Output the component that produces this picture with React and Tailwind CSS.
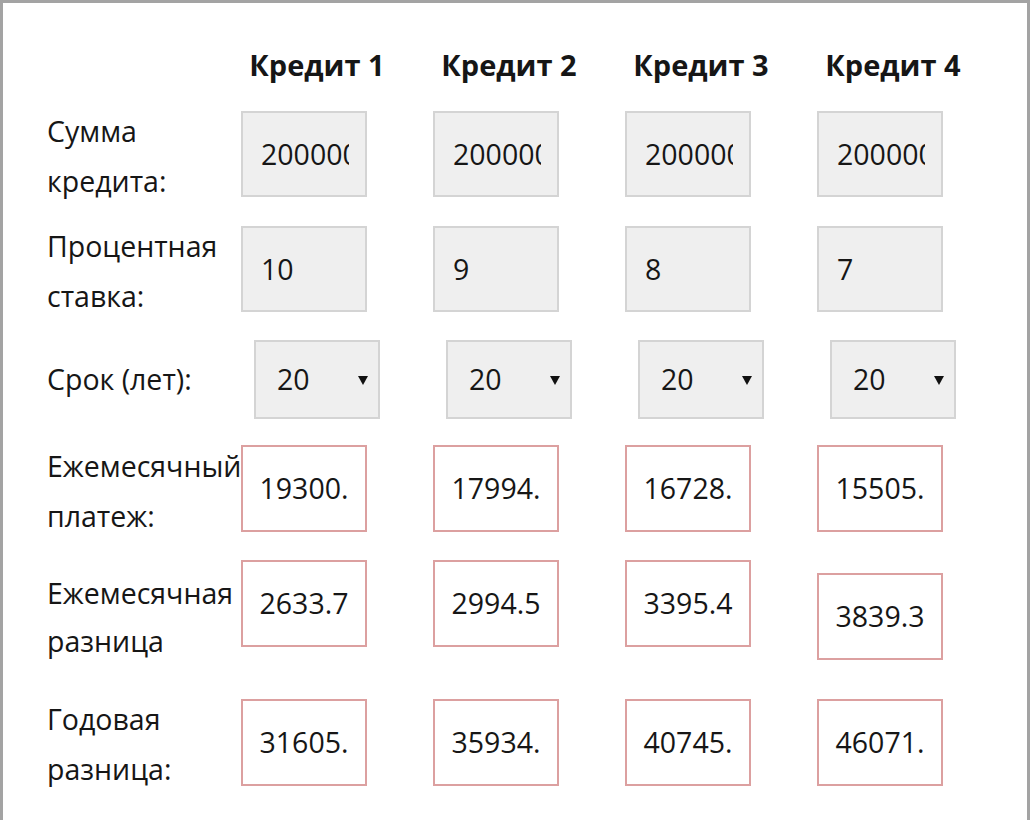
import React from "react";

const font = { fontFamily: '"Open Sans", "Noto Sans", sans-serif' };

function Arrow() {
  return (
    <svg width="10" height="9" viewBox="0 0 10 9" className="absolute right-[10px] top-[34px]">
      <path d="M0 0 L10 0 L5 9 Z" fill="#111" />
    </svg>
  );
}

function GrayBox({ value }) {
  return (
    <div className="w-[126px] h-[86px] border-2 border-[#d4d4d4] bg-[#efefef] pl-[18px] pr-[16px] flex items-center overflow-hidden">
      <span className="block overflow-hidden whitespace-nowrap w-full">{value}</span>
    </div>
  );
}

function RedBox({ value, mt = "" }) {
  return (
    <div className={`w-[126px] h-[87px] border-2 border-[#dca0a0] bg-white flex items-center justify-center overflow-hidden ${mt}`}>
      <span className="whitespace-nowrap">{value}</span>
    </div>
  );
}

function SelectBox() {
  return (
    <div className="relative mx-auto w-[126px] h-[79px] border-2 border-[#d4d4d4] bg-[#efefef] pl-[21px] flex items-center">
      <span>20</span>
      <Arrow />
    </div>
  );
}

export default function App() {
  const amounts = ["200000", "200000", "200000", "200000"];
  const rates = ["10", "9", "8", "7"];
  const monthly = ["19300.", "17994.", "16728.", "15505."];
  const diff = ["2633.7", "2994.5", "3395.4", "3839.3"];
  const yearly = ["31605.", "35934.", "40745.", "46071."];

  return (
    <div
      style={font}
      className="w-[1030px] h-[820px] bg-white border-t-[3px] border-l-[3px] border-r-[3px] border-[#a3a3a3] text-[#161616] text-[28.5px] overflow-hidden"
    >
      <div className="pl-[44px] pt-[37px]">
        {/* Header */}
        <div className="flex h-[50px] items-center">
          <div className="w-[194px]" />
          <div className="flex gap-[40px]">
            {[1, 2, 3, 4].map((n) => (
              <div key={n} className="w-[152px] text-center font-bold text-[29px] whitespace-nowrap">
                Кредит {n}
              </div>
            ))}
          </div>
        </div>

        {/* Row 1 */}
        <div className="flex items-start mt-[16px]">
          <div className="w-[194px] leading-[50px] whitespace-nowrap">
            Сумма<br />кредита:
          </div>
          <div className="flex gap-[40px] mt-[5px]">
            {amounts.map((v, i) => (
              <div key={i} className="w-[152px]">
                <GrayBox value={v} />
              </div>
            ))}
          </div>
        </div>

        {/* Row 2 */}
        <div className="flex items-start mt-[15px]">
          <div className="w-[194px] leading-[50px] whitespace-nowrap">
            Процентная<br />ставка:
          </div>
          <div className="flex gap-[40px] mt-[5px]">
            {rates.map((v, i) => (
              <div key={i} className="w-[152px]">
                <GrayBox value={v} />
              </div>
            ))}
          </div>
        </div>

        {/* Row 3 */}
        <div className="flex items-start mt-[19px]">
          <div className="w-[194px] leading-[50px] whitespace-nowrap mt-[14px]">Срок (лет):</div>
          <div className="flex gap-[40px]">
            {[0, 1, 2, 3].map((i) => (
              <div key={i} className="w-[152px]">
                <SelectBox />
              </div>
            ))}
          </div>
        </div>

        {/* Row 4 */}
        <div className="flex items-start mt-[22px]">
          <div className="w-[194px] leading-[50px] whitespace-nowrap">
            Ежемесячный<br />платеж:
          </div>
          <div className="flex gap-[40px] mt-[4px]">
            {monthly.map((v, i) => (
              <div key={i} className="w-[152px]">
                <RedBox value={v} />
              </div>
            ))}
          </div>
        </div>

        {/* Row 5 */}
        <div className="flex items-start mt-[19px]">
          <div className="w-[194px] leading-[48px] whitespace-nowrap mt-[9px]">
            Ежемесячная<br />разница
          </div>
          <div className="flex gap-[40px]">
            {diff.map((v, i) => (
              <div key={i} className="w-[152px]">
                <RedBox value={v} mt={i === 3 ? "mt-[13px]" : ""} />
              </div>
            ))}
          </div>
        </div>

        {/* Row 6 */}
        <div className="flex items-start mt-[29px]">
          <div className="w-[194px] leading-[50px] whitespace-nowrap">
            Годовая<br />разница:
          </div>
          <div className="flex gap-[40px] mt-[5px]">
            {yearly.map((v, i) => (
              <div key={i} className="w-[152px]">
                <RedBox value={v} />
              </div>
            ))}
          </div>
        </div>
      </div>
    </div>
  );
}
